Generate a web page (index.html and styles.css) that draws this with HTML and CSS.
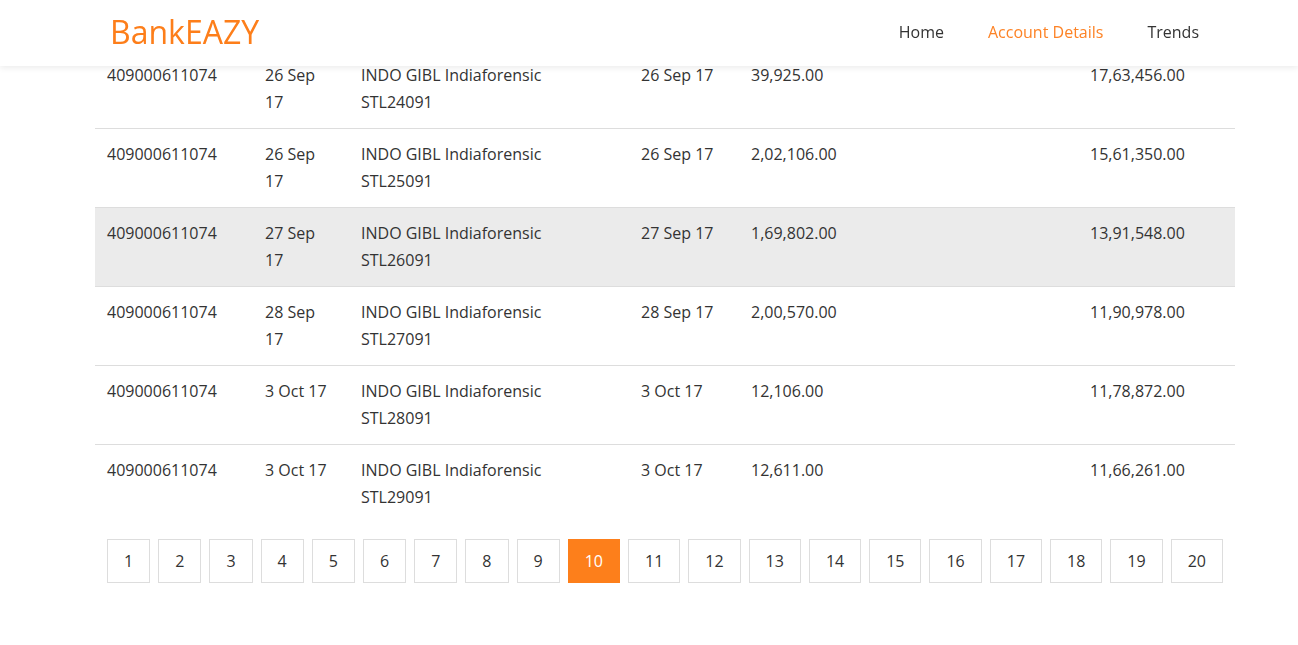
FILE: index.html
```html
<!DOCTYPE html>
<html>
<head>
<meta charset="utf-8">
<title>BankEAZY</title>
<link rel="stylesheet" href="styles.css">
</head>
<body>
<header class="topbar">
  <div class="topbar-inner">
    <a class="brand" href="#">BankEAZY</a>
    <nav class="nav">
      <a href="#" class="nav-link">Home</a>
      <a href="#" class="nav-link active">Account Details</a>
      <a href="#" class="nav-link">Trends</a>
    </nav>
  </div>
</header>
<main class="content">
  <table class="txn">
    <colgroup>
      <col class="c-acc"><col class="c-date"><col class="c-desc"><col class="c-vdate"><col class="c-wd"><col class="c-dep"><col class="c-bal">
    </colgroup>
    <tbody>
      <tr><td>409000611074</td><td>26 Sep 17</td><td>INDO GIBL Indiaforensic STL24091</td><td>26 Sep 17</td><td>39,925.00</td><td></td><td>17,63,456.00</td></tr>
      <tr><td>409000611074</td><td>26 Sep 17</td><td>INDO GIBL Indiaforensic STL25091</td><td>26 Sep 17</td><td>2,02,106.00</td><td></td><td>15,61,350.00</td></tr>
      <tr class="hover"><td>409000611074</td><td>27 Sep 17</td><td>INDO GIBL Indiaforensic STL26091</td><td>27 Sep 17</td><td>1,69,802.00</td><td></td><td>13,91,548.00</td></tr>
      <tr><td>409000611074</td><td>28 Sep 17</td><td>INDO GIBL Indiaforensic STL27091</td><td>28 Sep 17</td><td>2,00,570.00</td><td></td><td>11,90,978.00</td></tr>
      <tr><td>409000611074</td><td>3 Oct 17</td><td>INDO GIBL Indiaforensic STL28091</td><td>3 Oct 17</td><td>12,106.00</td><td></td><td>11,78,872.00</td></tr>
      <tr><td>409000611074</td><td>3 Oct 17</td><td>INDO GIBL Indiaforensic STL29091</td><td>3 Oct 17</td><td>12,611.00</td><td></td><td>11,66,261.00</td></tr>
    </tbody>
  </table>
  <ul class="pagination">
    <li><a href="#">1</a></li>
    <li><a href="#">2</a></li>
    <li><a href="#">3</a></li>
    <li><a href="#">4</a></li>
    <li><a href="#">5</a></li>
    <li><a href="#">6</a></li>
    <li><a href="#">7</a></li>
    <li><a href="#">8</a></li>
    <li><a href="#">9</a></li>
    <li><a href="#" class="current">10</a></li>
    <li><a href="#">11</a></li>
    <li><a href="#">12</a></li>
    <li><a href="#">13</a></li>
    <li><a href="#">14</a></li>
    <li><a href="#">15</a></li>
    <li><a href="#">16</a></li>
    <li><a href="#">17</a></li>
    <li><a href="#">18</a></li>
    <li><a href="#">19</a></li>
    <li><a href="#">20</a></li>
  </ul>
</main>
</body>
</html>
```

FILE: styles.css
```css
* { box-sizing: border-box; }
html, body {
  margin: 0;
  padding: 0;
  background: #ffffff;
  font-family: "Open Sans", "Liberation Sans", sans-serif;
  color: #333333;
  font-size: 16px;
}
a { text-decoration: none; }

.topbar {
  position: fixed;
  top: 0;
  left: 0;
  right: 0;
  height: 66px;
  background: #ffffff;
  box-shadow: 0 2px 6px rgba(0, 0, 0, 0.08);
  z-index: 10;
}
.topbar-inner {
  display: flex;
  align-items: center;
  justify-content: space-between;
  height: 100%;
  padding: 0 99px 0 110px;
}
.brand {
  color: #fd7e1a;
  font-size: 32px;
  line-height: 1;
  margin-top: -3px;
}
.nav {
  display: flex;
  align-items: center;
  gap: 44px;
  margin-top: -2px;
}
.nav-link {
  color: #333333;
  font-size: 16px;
  line-height: 22px;
}
.nav-link.active { color: #fd8326; }

.content {
  padding: 49px 0 40px 95px;
}
.txn {
  width: 1140px;
  border-collapse: collapse;
  table-layout: fixed;
}
.c-acc { width: 158px; }
.c-date { width: 96px; }
.c-desc { width: 280px; }
.c-vdate { width: 110px; }
.c-wd { width: 170px; }
.c-dep { width: 169px; }
.c-bal { width: 157px; }
.txn td {
  border-top: 1px solid #dddddd;
  padding: 12px 12px 12px 12px;
  line-height: 27px;
  vertical-align: top;
  color: #333333;
}
.txn tr.hover td { background: #ebebeb; }

.pagination {
  list-style: none;
  margin: 16px 0 0 12px;
  padding: 0;
  display: flex;
  gap: 8px;
}
.pagination a {
  display: flex;
  align-items: center;
  justify-content: center;
  height: 44px;
  min-width: 43.2px;
  padding: 0 16px;
  border: 1px solid #dddddd;
  color: #333333;
  font-size: 16px;
}
.pagination a.current {
  background: #fd7f1b;
  border-color: #fd7f1b;
  color: #ffffff;
}
```
